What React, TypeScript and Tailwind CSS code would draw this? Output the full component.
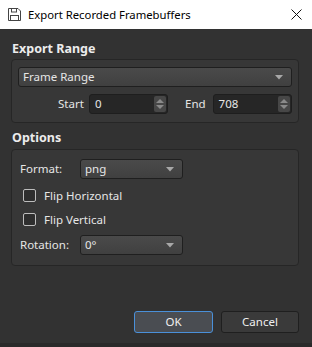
import React from "react";

const font = { fontFamily: '"Noto Sans", "Open Sans", sans-serif' };

function Arrow() {
  return (
    <svg width="8" height="5" viewBox="0 0 8 5" className="shrink-0">
      <path d="M0 0 L8 0 L4 4.5 Z" fill="#a8a8a8" />
    </svg>
  );
}

function Combo({ text, className }: { text: string; className: string }) {
  return (
    <div
      className={`flex items-center justify-between h-[20px] rounded-[3px] border border-[#1f1f1f] bg-gradient-to-b from-[#4a4a4a] to-[#404040] pl-[4px] pr-[8px] text-[11.5px] text-[#e6e6e6] ${className}`}
    >
      <span className="leading-none">{text}</span>
      <Arrow />
    </div>
  );
}

function Spin({ value, className }: { value: string; className: string }) {
  return (
    <div
      className={`flex items-center h-[20px] rounded-[3px] border border-[#1e1e1e] bg-[#262626] pl-[5px] pr-[1px] text-[11.5px] text-[#e6e6e6] ${className}`}
    >
      <span className="flex-1 leading-none">{value}</span>
      <div className="flex flex-col items-center justify-center w-[12px] h-[16px] rounded-[2px] bg-[#474747] gap-[2px]">
        <svg width="8" height="4" viewBox="0 0 8 4">
          <path d="M0 4 L8 4 L4 0 Z" fill="#8a8a8a" />
        </svg>
        <svg width="8" height="4" viewBox="0 0 8 4">
          <path d="M0 0 L8 0 L4 4 Z" fill="#8a8a8a" />
        </svg>
      </div>
    </div>
  );
}

function Check({ label }: { label: string }) {
  return (
    <div className="flex items-center h-[13px] pl-[11px]">
      <div className="w-[13px] h-[13px] rounded-[2px] border-[1.5px] border-[#bdbdbd] bg-[#2e2e2e]" />
      <span className="ml-[8px] text-[11.5px] text-[#e6e6e6] leading-none">{label}</span>
    </div>
  );
}

export default function App() {
  return (
    <div className="w-[312px] h-[347px] flex flex-col overflow-hidden" style={font}>
      {/* Title bar */}
      <div className="h-[29px] bg-white flex items-center shrink-0">
        <svg width="13" height="13" viewBox="0 0 13 13" className="ml-[8px]">
          <path d="M0.5 0.5 H10 L12.5 3 V12.5 H0.5 Z" fill="none" stroke="#444" strokeWidth="1" />
          <rect x="3.5" y="0.5" width="5" height="3.5" fill="none" stroke="#444" strokeWidth="1" />
          <rect x="2.5" y="7.5" width="8" height="5" fill="none" stroke="#444" strokeWidth="1" />
        </svg>
        <span className="ml-[7px] text-[11.3px] text-black leading-none">Export Recorded Framebuffers</span>
        <svg width="11" height="11" viewBox="0 0 11 11" className="ml-auto mr-[10px]">
          <path d="M0.5 0.5 L10.5 10.5 M10.5 0.5 L0.5 10.5" stroke="#111" strokeWidth="1" />
        </svg>
      </div>

      {/* Body */}
      <div className="flex-1 bg-[#323232] flex flex-col pl-[11px] pr-[13px] pt-[12px]">
        <div className="text-[12.5px] font-bold text-[#ececec] leading-[16px] pl-[1px]">Export Range</div>
        <div className="mt-[2px] h-[64px] rounded-[4px] border border-[#262626] bg-[#373737] px-[6px] pt-[7px] flex flex-col">
          <Combo text="Frame Range" className="w-full" />
          <div className="mt-[7px] flex items-center">
            <span className="ml-[40px] w-[26px] text-[11.5px] text-[#e6e6e6] leading-none">Start</span>
            <Spin value="0" className="ml-[5px] w-[79px]" />
            <span className="ml-[17px] text-[11.5px] text-[#e6e6e6] leading-none">End</span>
            <Spin value="708" className="ml-[7px] w-[79px]" />
          </div>
        </div>

        <div className="mt-[7px] text-[12.5px] font-bold text-[#ececec] leading-[16px] pl-[1px]">Options</div>
        <div className="mt-[3px] h-[117px] rounded-[4px] border border-[#262626] bg-[#373737] pt-[9px] flex flex-col">
          <div className="flex items-center pl-[8px]">
            <span className="w-[60px] text-[11.5px] text-[#e6e6e6] leading-none">Format:</span>
            <Combo text="png" className="w-[103px]" />
          </div>
          <div className="mt-[10px]">
            <Check label="Flip Horizontal" />
          </div>
          <div className="mt-[11px]">
            <Check label="Flip Vertical" />
          </div>
          <div className="mt-[9px] flex items-center pl-[8px]">
            <span className="w-[60px] text-[11.5px] text-[#e6e6e6] leading-none">Rotation:</span>
            <Combo text="0°" className="w-[103px]" />
          </div>
        </div>

        <div className="mt-auto mb-[10px] flex justify-end gap-[8px]">
          <button className="w-[79px] h-[22px] rounded-[3px] border border-[#4a90d9] bg-[#4a4d52] text-[11.5px] text-[#f0f0f0] leading-none">
            OK
          </button>
          <button className="w-[78px] h-[22px] rounded-[3px] border border-[#1f1f1f] bg-[#3a3a3a] text-[11.5px] text-[#f0f0f0] leading-none">
            Cancel
          </button>
        </div>
      </div>
      <div className="h-[4px] bg-[#2a2a2a] shrink-0" />
    </div>
  );
}
